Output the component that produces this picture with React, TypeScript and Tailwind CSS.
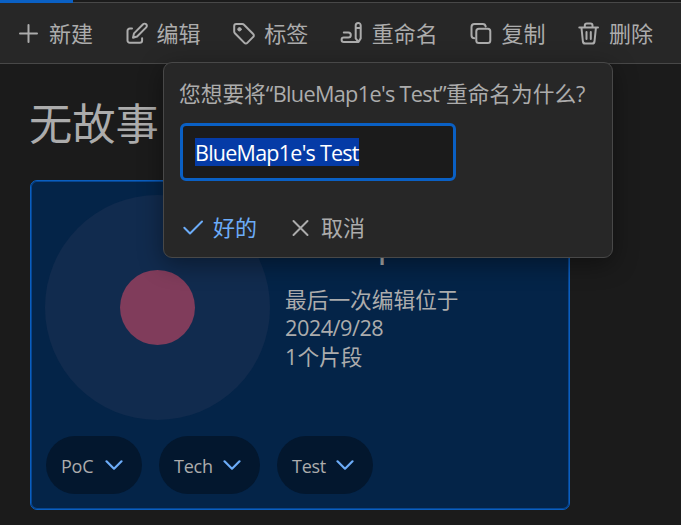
import type { ReactNode } from "react";

const ui = "font-['Open_Sans','Noto_Sans_CJK_SC',sans-serif]";

function Icon({ box, children, className = "size-6" }: { box: string; children: ReactNode; className?: string }) {
  return (
    <svg viewBox={box} className={`${className} shrink-0`} fill="none" stroke="currentColor" strokeWidth="2" strokeLinecap="round" strokeLinejoin="round">
      {children}
    </svg>
  );
}

function Tool({ icon, label, width }: { icon: ReactNode; label: string; width: string }) {
  return (
    <button className="flex items-center gap-2">
      {icon}
      <span className={`${width} text-left whitespace-nowrap`}>{label}</span>
    </button>
  );
}

function Toolbar() {
  return (
    <header className="flex h-[62px] items-center gap-[31.6px] border-y border-[#484848] bg-[#272727] pl-[17px] pb-px text-[22px] leading-[30px]">
      <Tool label="新建" width="w-[44px]" icon={
        <Icon box="17 21 24 24"><path d="M28.500 25v17M20 33.500h17" /></Icon>} />
      <Tool label="编辑" width="w-[44px]" icon={
        <Icon box="125 21 24 24">
          <path d="M132 28.500h-2.200a2.300 2.300 0 0 0-2.300 2.300v9.700a2.300 2.300 0 0 0 2.300 2.300h10a2.300 2.300 0 0 0 2.300-2.300v-2.300" />
          <path d="M133 37.800l1-4.400 9.100-9.100a2.100 2.100 0 0 1 3.100 3.100l-9.100 9.100z" />
        </Icon>} />
      <Tool label="标签" width="w-[44px]" icon={
        <Icon box="232 21 24 24">
          <path d="M236.200 24h6.100q1 0 1.700.7l9.200 9.300a2 2 0 0 1 0 2.900l-5.900 6a2 2 0 0 1-2.900 0l-9.500-9.600a2.500 2.500 0 0 1-.7-1.800v-5.500a2 2 0 0 1 2-2z" />
          <circle cx="239.500" cy="29.300" r="1.700" fill="currentColor" strokeWidth="1" />
        </Icon>} />
      <Tool label="重命名" width="w-[66px]" icon={
        <Icon box="340 21 24 24">
          <path d="M343.800 32.500h4.500a2.500 2.500 0 0 1 0 5h-4.500a2.200 2.200 0 0 0 0 4.400h14.700l2.200-3.500v-13a2.500 2.500 0 0 0-5 0v13l2.300 3M355.700 28h5" />
        </Icon>} />
      <Tool label="复制" width="w-[44px]" icon={
        <Icon box="469 21 24 24">
          <rect x="476.300" y="28.700" width="14" height="14.300" rx="2.500" />
          <path d="M474.500 38.300a3 3 0 0 1-3-3v-8.300a3 3 0 0 1 3-3h8.200a3 3 0 0 1 3 2.500" />
        </Icon>} />
      <Tool label="删除" width="w-[44px]" icon={
        <Icon box="577 21 24 24">
          <path d="M579.300 27.500h18.700M584.800 27.300v-1.800a2 2 0 0 1 2-2h3.700a2 2 0 0 1 2 2v1.800M581.500 28l1.400 13.500a2.300 2.300 0 0 0 2.300 2h7a2.300 2.300 0 0 0 2.300-2l1.400-13.500M586.500 32v7M590.800 32v7" />
        </Icon>} />
    </header>
  );
}

function Tag({ label, width }: { label: string; width: string }) {
  return (
    <button className={`${width} flex h-[58px] items-center justify-between rounded-full bg-[#03172e] pl-[15px] pr-[19px] text-[18px]`}>
      <span className="pt-0.5 tracking-[-0.25px]">{label}</span>
      <svg viewBox="0 0 18 10" className="h-[10px] w-[18px] text-[#6cacf8]" fill="none" stroke="currentColor" strokeWidth="2.2" strokeLinecap="round" strokeLinejoin="round">
        <path d="M1.500 1.300 9 8.700l7.500-7.400" />
      </svg>
    </button>
  );
}

function StoryCard() {
  return (
    <article className="flex h-[330px] w-[540px] flex-col rounded-[7px] border border-[#0a5fc0] bg-[#042448] pl-[14px] pt-[14px] shadow-[inset_0_0_0_1px_#074590]">
      <div className="flex h-[225px] gap-[15px]">
        <div className="flex size-[225px] items-center justify-center rounded-full bg-[#112b4e]">
          <div className="size-[75px] rounded-full bg-[#803c5b]" />
        </div>
        <div className="flex flex-col">
          <h2 className="h-[91px] pt-[33px] text-[27px] leading-[40px] font-semibold tracking-[-0.9px]">BlueMap1e's</h2>
          <p className="text-[21.7px] leading-[28.5px]">最后一次编辑位于</p>
          <p className="-mt-px text-[21.7px] leading-[28.5px] tracking-[-0.5px]">2024/9/28</p>
          <p className="mt-px text-[21.7px] leading-[28.5px]">1个片段</p>
        </div>
      </div>
      <div className="ml-px mt-4 flex gap-[17px]">
        <Tag label="PoC" width="w-[96px]" />
        <Tag label="Tech" width="w-[101px]" />
        <Tag label="Test" width="w-[96px]" />
      </div>
    </article>
  );
}

function RenameDialog() {
  return (
    <div role="dialog" className="absolute left-[163px] top-[62px] flex h-[196px] w-[450px] flex-col rounded-[9px] border border-[#484848] bg-[#272727] pl-4 pt-4 shadow-[0_6px_24px_rgba(0,0,0,0.4)]">
      <p className="-ml-px h-[30px] whitespace-nowrap text-[21.7px] leading-[30px]">
        您想要将<span className="tracking-[-0.68px]">“BlueMap1e's Test”</span>重命名为什么?
      </p>
      <div className="mt-[14px] flex h-[58px] w-[276px] items-center rounded-md border-[3px] border-[#0a60c4] bg-[#1b1b1b] pl-3">
        <span className="h-7 w-[164px] whitespace-nowrap bg-[#053ba6] text-[21.5px] leading-[30px] tracking-[-0.75px] text-white">BlueMap1e's Test</span>
      </div>
      <div className="mt-[31px] flex h-[30px] items-center text-[22px] leading-[30px]">
        <button className="flex items-center gap-[9px] text-[#6cacf8]">
          <Icon box="180 215 24 24"><path d="M184.300 227.800l5.700 5.700 12-12" /></Icon>
          <span>好的</span>
        </button>
        <button className="ml-[31px] flex items-center gap-[9px]">
          <Icon box="288 215 24 24"><path d="M293.500 221l14 14M307.500 221l-14 14" /></Icon>
          <span>取消</span>
        </button>
      </div>
    </div>
  );
}

export default function App() {
  return (
    <div className={`${ui} relative h-[525px] w-[681px] overflow-hidden bg-[#1b1b1b] text-[#acacac]`}>
      <div className="h-0.5 bg-[#1b1b1b]">
        <div className="relative z-10 h-[3px] w-[73px] bg-[#0a60c4]" />
      </div>
      <Toolbar />
      <main className="px-[30px] pt-[28px]">
        <h1 className="-ml-px h-[88px] text-[43.3px] leading-[64px]">无故事</h1>
        <StoryCard />
      </main>
      <RenameDialog />
    </div>
  );
}
